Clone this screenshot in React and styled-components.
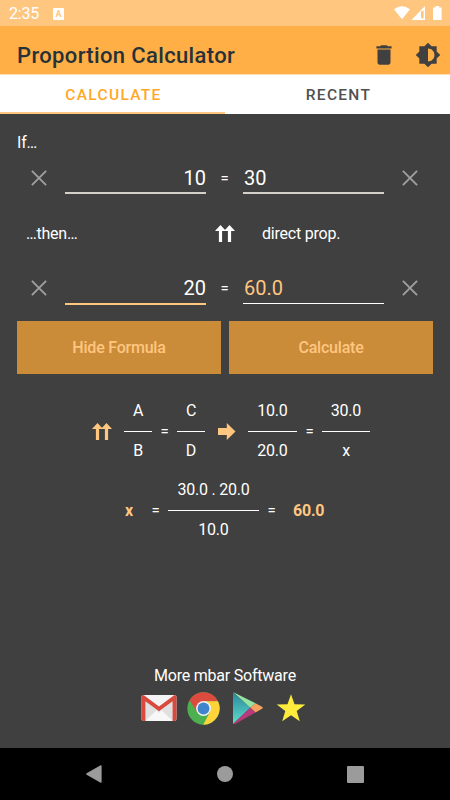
import React, { useState } from "react";
import styled, { createGlobalStyle } from "styled-components";
import { MdDelete, MdBrightness6 } from "react-icons/md";

const tabs = ["Calculate", "Recent"];

function Cross() {
  return (
    <svg width="16" height="16" viewBox="0 0 16 16" fill="none" stroke="#9f9f9f" strokeWidth="1.9">
      <path d="M0.9 0.9 15.1 15.1M15.1 0.9 0.9 15.1" />
    </svg>
  );
}

function DoubleArrow({ color = "#fff" }) {
  return (
    <svg width="20" height="17" viewBox="0 0 20 17" fill={color}>
      <path d="M5.5 0 11 6H7.1V17H3.9V6H0Z" />
      <path d="M14.5 0 20 6H16.1V17H12.9V6H9Z" />
    </svg>
  );
}

function RightArrow() {
  return (
    <svg width="18" height="17" viewBox="0 0 18 17" fill="#ffc680">
      <path d="M0 5H8.8V0L17.5 8.5 8.8 17V12H0Z" />
    </svg>
  );
}

function StatusIcons() {
  return (
    <svg width="48" height="15" viewBox="0 0 48 15" fill="#fff">
      <path d="M0 3.2Q8 -2.6 16 3.2L8 13.2Z" />
      <path d="M31 0V14H17.5ZM27 5.5V12.3H29.6V4.2Z" fillRule="evenodd" />
      <path d="M41.5 0H45.2V1.6H47.6V14H39V1.6H41.5Z" />
    </svg>
  );
}

function Gmail() {
  return (
    <svg width="36" height="28" viewBox="0 0 36 28">
      <rect x="0.5" y="1" width="35" height="26" rx="2" fill="#e9e9e9" />
      <path d="M4 27 18 14 32 27Z" fill="#f7f7f7" />
      <path d="M4 5 18 19 32 5V27L18 14 4 27Z" fill="#dadada" opacity="0.6" />
      <path d="M3 1H33L18 12.6Z" fill="#f4f4f4" />
      <path d="M0.5 3Q0.5 1 2.5 1L18 12.6 33.5 1Q35.5 1 35.5 3V25Q35.5 27 33.5 27H31.6V7.2L18 17.3 4.4 7.2V27H2.5Q0.5 27 0.5 25Z" fill="#d94a3e" />
    </svg>
  );
}

function Chrome() {
  return (
    <svg width="33" height="33" viewBox="0 0 48 48">
      <circle cx="24" cy="24" r="23.5" fill="#4caf50" />
      <path d="M24 24 3.8 12A23.5 23.5 0 0 1 45 13.4L24 13.4Z" fill="#dd4b3e" />
      <path d="M24 13.4H45A23.5 23.5 0 0 1 23.6 47.5L33.2 29.3 24 24Z" fill="#ffd43b" />
      <path d="M3.8 12 14.8 29.3 24 24 24 13.4Z" fill="#dd4b3e" />
      <circle cx="24" cy="24" r="10.8" fill="#f1f1f1" />
      <circle cx="24" cy="24" r="8.6" fill="#3f84cc" />
    </svg>
  );
}

function PlayStore() {
  return (
    <svg width="32" height="34" viewBox="0 0 32 34">
      <defs>
        <linearGradient id="play" x1="0" y1="0" x2="0" y2="1">
          <stop offset="0" stopColor="#2c879f" />
          <stop offset="1" stopColor="#5dddc8" />
        </linearGradient>
      </defs>
      <path d="M1 1.5 18.3 16.8 1 33Z" fill="url(#play)" />
      <path d="M1 1 23.5 12.3 18.3 16.8Z" fill="#94e4a3" />
      <path d="M23.5 12.3 30 15.8Q31.5 16.8 30 17.8L23.5 21.4 18.3 16.8Z" fill="#f5a25d" />
      <path d="M1 33 18.3 16.8 23.5 21.4 3 33Z" fill="#b93a7c" />
    </svg>
  );
}

function Star() {
  return (
    <svg width="30" height="28" viewBox="0 0 30 28" fill="#ffeb3b">
      <path d="M15 0.3 18.5 10.3 29.3 10.5 20.7 17 23.8 27.3 15 21.3 6.2 27.3 9.3 17 0.7 10.5 11.5 10.3Z" />
    </svg>
  );
}

function Fraction({ top, bottom, width }) {
  return (
    <FractionBox $width={width}>
      <span>{top}</span>
      <hr />
      <span>{bottom}</span>
    </FractionBox>
  );
}

export default function App() {
  const [activeTab, setActiveTab] = useState("Calculate");
  const [first, setFirst] = useState("10");
  const [second, setSecond] = useState("30");
  const [third, setThird] = useState("20");
  const [result, setResult] = useState("60.0");

  const calculate = () => {
    const value = (Number(second) * Number(third)) / Number(first);
    if (Number.isFinite(value)) setResult(value.toFixed(1));
  };

  return (
    <>
      <GlobalStyle />
      <Screen>
        <StatusBar>
          <Clock>2:35</Clock>
          <KeyboardBadge>A</KeyboardBadge>
          <StatusIcons />
        </StatusBar>

        <Toolbar>
          <h1>Proportion Calculator</h1>
          <MdDelete size={26} />
          <MdBrightness6 size={26} />
        </Toolbar>

        <TabBar>
          {tabs.map((tab) => (
            <Tab key={tab} $active={tab === activeTab} onClick={() => setActiveTab(tab)}>
              {tab}
            </Tab>
          ))}
        </TabBar>

        <Content>
          <IfLabel>If…</IfLabel>
          <ValueRow>
            <ClearButton onClick={() => setFirst("")}><Cross /></ClearButton>
            <Field $align="right" value={first} onChange={(e) => setFirst(e.target.value)} />
            <Equals $width={37}>=</Equals>
            <Field value={second} onChange={(e) => setSecond(e.target.value)} />
            <ClearButton onClick={() => setSecond("")}><Cross /></ClearButton>
          </ValueRow>

          <ThenRow>
            <span>…then…</span>
            <DoubleArrow />
            <span>direct prop.</span>
          </ThenRow>

          <ValueRow>
            <ClearButton onClick={() => setThird("")}><Cross /></ClearButton>
            <Field $align="right" $line="#ffc680" $height={43} value={third} onChange={(e) => setThird(e.target.value)} />
            <Equals $width={37}>=</Equals>
            <Field $color="#ffc680" $line="#fff" $thin value={result} readOnly />
            <ClearButton onClick={() => setResult("")}><Cross /></ClearButton>
          </ValueRow>

          <Buttons>
            <Button>Hide Formula</Button>
            <Button onClick={calculate}>Calculate</Button>
          </Buttons>

          <FormulaRow>
            <DoubleArrow color="#ffc680" />
            <Fraction top="A" bottom="B" width={28} />
            <Equals $width={25}>=</Equals>
            <Fraction top="C" bottom="D" width={28} />
            <RightArrow />
            <Fraction top="10.0" bottom="20.0" width={49} />
            <Equals $width={25}>=</Equals>
            <Fraction top="30.0" bottom="x" width={48} />
          </FormulaRow>

          <ResultRow>
            <Accent>x</Accent>
            <Equals $width={25}>=</Equals>
            <Fraction top="30.0 . 20.0" bottom="10.0" width={91} />
            <Equals $width={25}>=</Equals>
            <Accent>60.0</Accent>
          </ResultRow>
        </Content>

        <Footer>
          <p>More mbar Software</p>
          <Apps>
            <Gmail />
            <Chrome />
            <PlayStore />
            <Star />
          </Apps>
        </Footer>

        <NavBar>
          <svg width="16" height="18" viewBox="0 0 16 18"><path d="M0.6 8.3 14.6 0.3Q15.6 0 15.6 1V17Q15.6 18 14.6 17.7L0.6 9.7Q-0.2 9 0.6 8.3Z" /></svg>
          <svg width="16" height="16" viewBox="0 0 16 16"><circle cx="8" cy="8" r="8" /></svg>
          <svg width="17" height="17" viewBox="0 0 17 17"><rect width="17" height="17" rx="1" /></svg>
        </NavBar>
      </Screen>
    </>
  );
}

const GlobalStyle = createGlobalStyle`
  * { box-sizing: border-box; }
  body { margin: 0; background: #404040; }
  button, input { font-family: inherit; border: none; padding: 0; background: none; }
  svg { display: block; flex-shrink: 0; }
`;

const Screen = styled.div`
  display: flex;
  flex-direction: column;
  width: 450px;
  height: 800px;
  overflow: hidden;
  background: #404040;
  color: #fff;
  font-family: Roboto, "Liberation Sans", sans-serif;
  font-size: 16px;
  letter-spacing: -0.22px;
`;

const StatusBar = styled.header`
  display: flex;
  align-items: center;
  height: 26px;
  padding: 1px 8px 0 9px;
  background: #ffc680;
  > svg { margin-left: auto; }
`;

const Clock = styled.span`
  width: 44px;
  line-height: 26px;
`;

const KeyboardBadge = styled.span`
  width: 11px;
  height: 12px;
  border-radius: 1px;
  background: #fff;
  color: #ffc680;
  font-size: 9px;
  font-weight: 700;
  line-height: 12px;
  text-align: center;
`;

const Toolbar = styled.div`
  display: flex;
  align-items: center;
  height: 48px;
  padding: 9px 9px 0 17px;
  background: #ffaf45;
  color: #404040;
  h1 {
    flex: 1;
    margin: 0;
    padding-top: 2px;
    color: #263238;
    font-size: 22px;
    font-weight: 500;
    letter-spacing: 0.36px;
    line-height: 38px;
  }
  svg + svg { margin-left: 18px; }
`;

const TabBar = styled.nav`
  display: grid;
  grid-template-columns: 1fr 1fr;
  height: 40px;
  border-top: 1px solid #ffe0b8;
  background: #fff;
`;

const Tab = styled.button`
  padding: 2px 0 0 2px;
  border-bottom: 2px solid ${({ $active }) => ($active ? "#ffc680" : "#fff")};
  color: ${({ $active }) => ($active ? "#ffa726" : "#505050")};
  font-size: 15.5px;
  font-weight: 500;
  letter-spacing: 1.3px;
  text-transform: uppercase;
`;

const Content = styled.main`
  display: flex;
  flex-direction: column;
  flex: 1;
  padding: 18px 17px 0;
`;

const IfLabel = styled.div`
  height: 20px;
  line-height: 22px;
`;

const ValueRow = styled.div`
  display: flex;
  height: 42px;
`;

const ClearButton = styled.button`
  display: flex;
  justify-content: center;
  align-items: center;
  width: 44px;
  padding-top: 9px;
  &:first-child { margin-right: 4px; }
  &:last-child { margin-left: 4px; }
`;

const Field = styled.input`
  width: 141px;
  height: ${({ $height = 42 }) => $height}px;
  padding-top: ${({ $height = 42 }) => 53 - $height}px;
  padding-left: 1px;
  border-bottom: ${({ $thin }) => ($thin ? "1px" : "2px")} solid ${({ $line = "#d3d0ca" }) => $line};
  outline: none;
  color: ${({ $color = "#fff" }) => $color};
  font-size: 20px;
  text-align: ${({ $align = "left" }) => $align};
`;

const Equals = styled.span`
  align-self: center;
  width: ${({ $width }) => $width}px;
  font-size: 15px;
  text-align: center;
  ${ValueRow} & { padding-top: 10px; }
`;

const ThenRow = styled.div`
  display: grid;
  grid-template-columns: 189px 47px 1fr;
  align-items: center;
  height: 68px;
  padding: 10px 0 0 9px;
`;

const Buttons = styled.div`
  display: grid;
  grid-template-columns: 1fr 1fr;
  gap: 8px;
  margin-top: 17px;
`;

const Button = styled.button`
  height: 53px;
  background: #ca8c39;
  color: #ffc680;
  font-size: 16px;
  font-weight: 500;
  letter-spacing: -0.22px;
`;

const FormulaRow = styled.div`
  display: flex;
  align-items: center;
  height: 60px;
  margin-top: 27px;
  padding-left: 75px;
  > svg:first-child { margin-right: 12px; }
  > svg:not(:first-child) { margin: 0 12.5px; }
`;

const Accent = styled.strong`
  color: #ffc680;
  font-weight: 700;
`;

const ResultRow = styled(FormulaRow)`
  margin-top: 19px;
  padding-left: 108px;
  ${Accent}:first-child { width: 18px; }
  ${Accent}:last-child { margin-left: 9px; }
`;

const FractionBox = styled.div`
  display: flex;
  flex-direction: column;
  align-items: center;
  width: ${({ $width }) => $width}px;
  span { line-height: 20px; white-space: pre; }
  hr { align-self: stretch; height: 1px; margin: 10px 0 9px; border: 0; background: #fff; }
`;

const Footer = styled.footer`
  height: 83px;
  p { margin: 0; line-height: 22px; text-align: center; }
`;

const Apps = styled.div`
  display: flex;
  align-items: center;
  gap: 12px;
  height: 42px;
  padding-left: 141px;
  svg:first-child { margin-right: -2px; }
`;

const NavBar = styled.div`
  display: flex;
  justify-content: space-between;
  align-items: center;
  height: 52px;
  padding: 0 86px;
  background: #000;
  fill: #9b9b9b;
`;
